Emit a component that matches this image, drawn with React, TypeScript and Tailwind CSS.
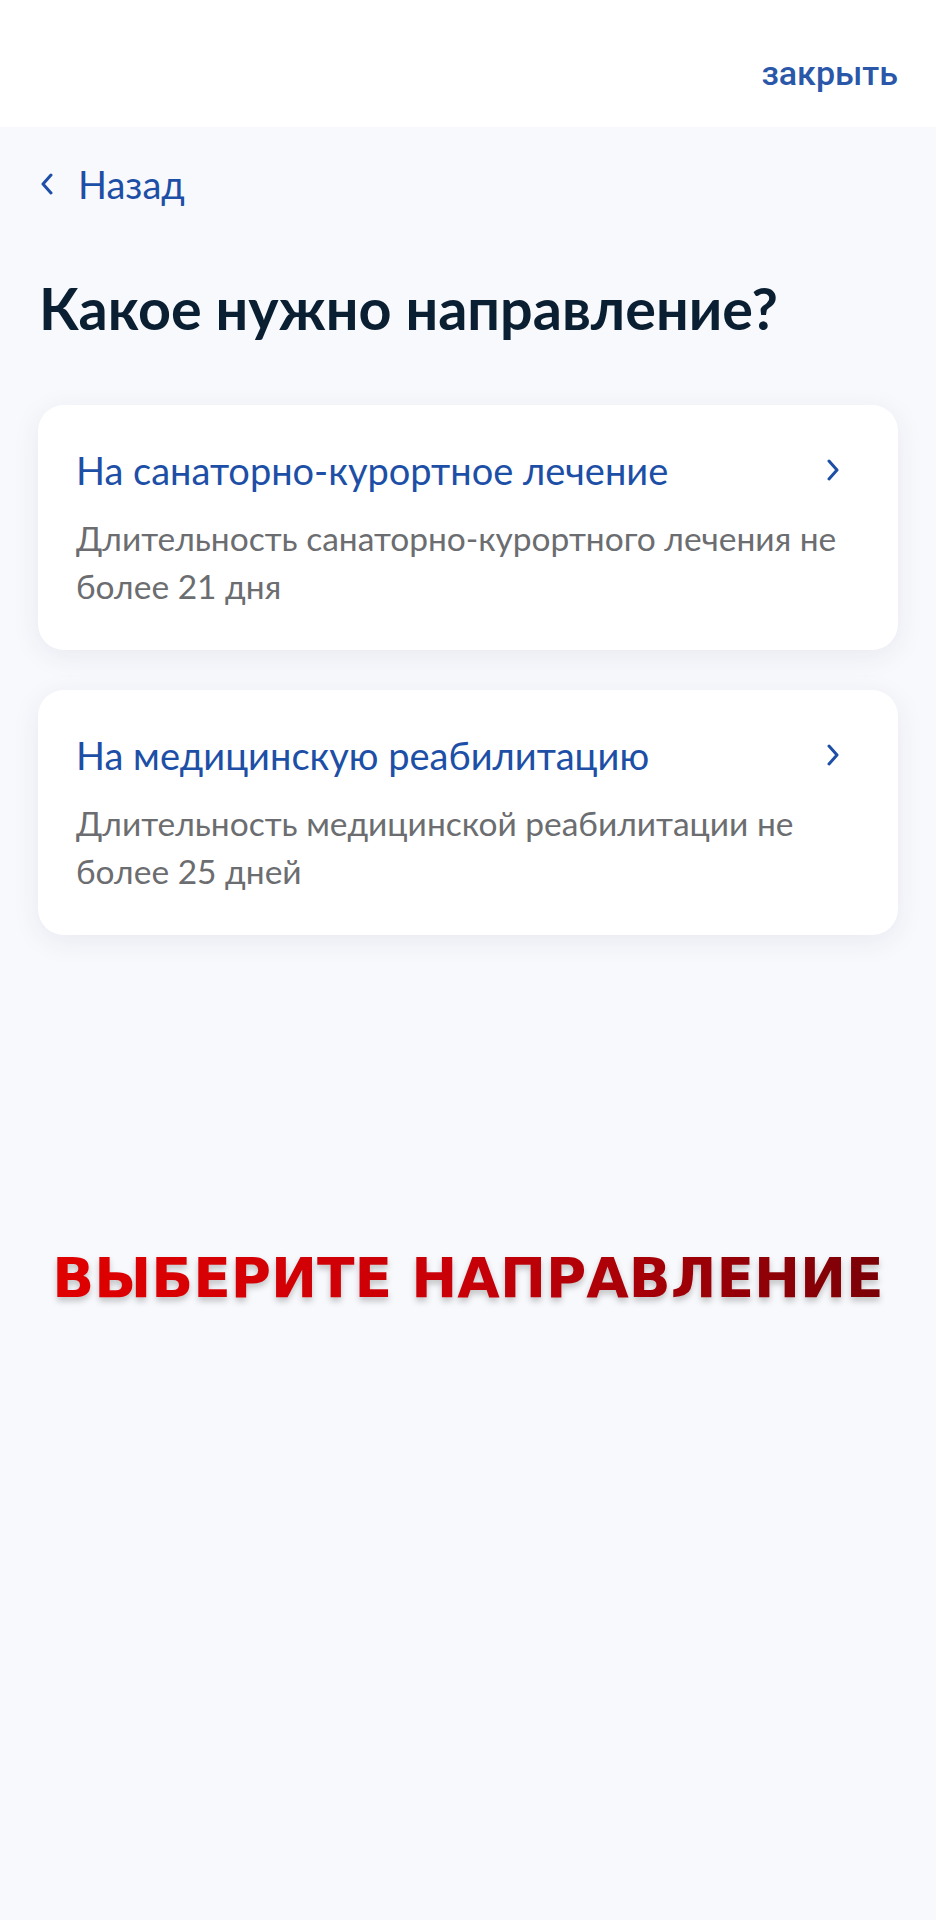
import React from 'react';

const options = [
  {
    title: 'На санаторно-курортное лечение',
    text: 'Длительность санаторно-курортного лечения не более 21 дня',
  },
  {
    title: 'На медицинскую реабилитацию',
    text: 'Длительность медицинской реабилитации не более 25 дней',
  },
];

const Chevron = ({ dir }: { dir: 'left' | 'right' }) => (
  <svg width="14" height="22" viewBox="0 0 14 22" fill="none" className="shrink-0">
    <polyline
      points={dir === 'right' ? '3,2 11,11 3,20' : '11,2 3,11 11,20'}
      stroke="#1d4fa6"
      strokeWidth="3"
      strokeLinecap="round"
      strokeLinejoin="round"
    />
  </svg>
);

const App = () => {
  return (
    <div className="min-h-[1920px] w-full bg-[#f8f9fc] font-['Lato',sans-serif]">
      <header className="h-[127px] bg-white flex justify-end items-start pt-[53px] pr-[38px]">
        <button className="font-['Roboto',sans-serif] text-[34px] leading-[40px] font-medium text-[#2a57a8]">
          закрыть
        </button>
      </header>

      <main className="px-[38px] pt-[33px]">
        <button className="flex items-center gap-[24px] pl-[2px] text-[38px] leading-[48px] text-[#1d4fa6]">
          <Chevron dir="left" />
          <span>Назад</span>
        </button>

        <h1 className="mt-[65px] pl-[1px] text-[57.5px] leading-[70px] font-bold text-[#0b1f33]">
          Какое нужно направление?
        </h1>

        <div className="mt-[62px] flex flex-col gap-[40px]">
          {options.map(o => (
            <div
              key={o.title}
              className="bg-white rounded-[26px] shadow-[0_6px_28px_rgba(30,50,110,0.08)] pt-[41px] pb-[40px] pl-[38px] pr-[40px]"
            >
              <div className="flex items-center justify-between">
                <span className="text-[38px] leading-[48px] text-[#1d4fa6]">{o.title}</span>
                <span className="mr-[18px]">
                  <Chevron dir="right" />
                </span>
              </div>
              <p className="mt-[20px] text-[33.5px] leading-[48px] text-[#6b6d70]">{o.text}</p>
            </div>
          ))}
        </div>
      </main>

      <div className="mt-[316px] flex justify-center">
        <span className="font-['DejaVu_Sans',sans-serif] font-bold text-[55px] leading-[55px] bg-gradient-to-r from-[#e00000] via-[#c80008] to-[#7a0006] bg-clip-text text-transparent drop-shadow-[0_4px_3px_rgba(0,0,0,0.22)]">
          ВЫБЕРИТЕ НАПРАВЛЕНИЕ
        </span>
      </div>
    </div>
  );
};

export default App;
